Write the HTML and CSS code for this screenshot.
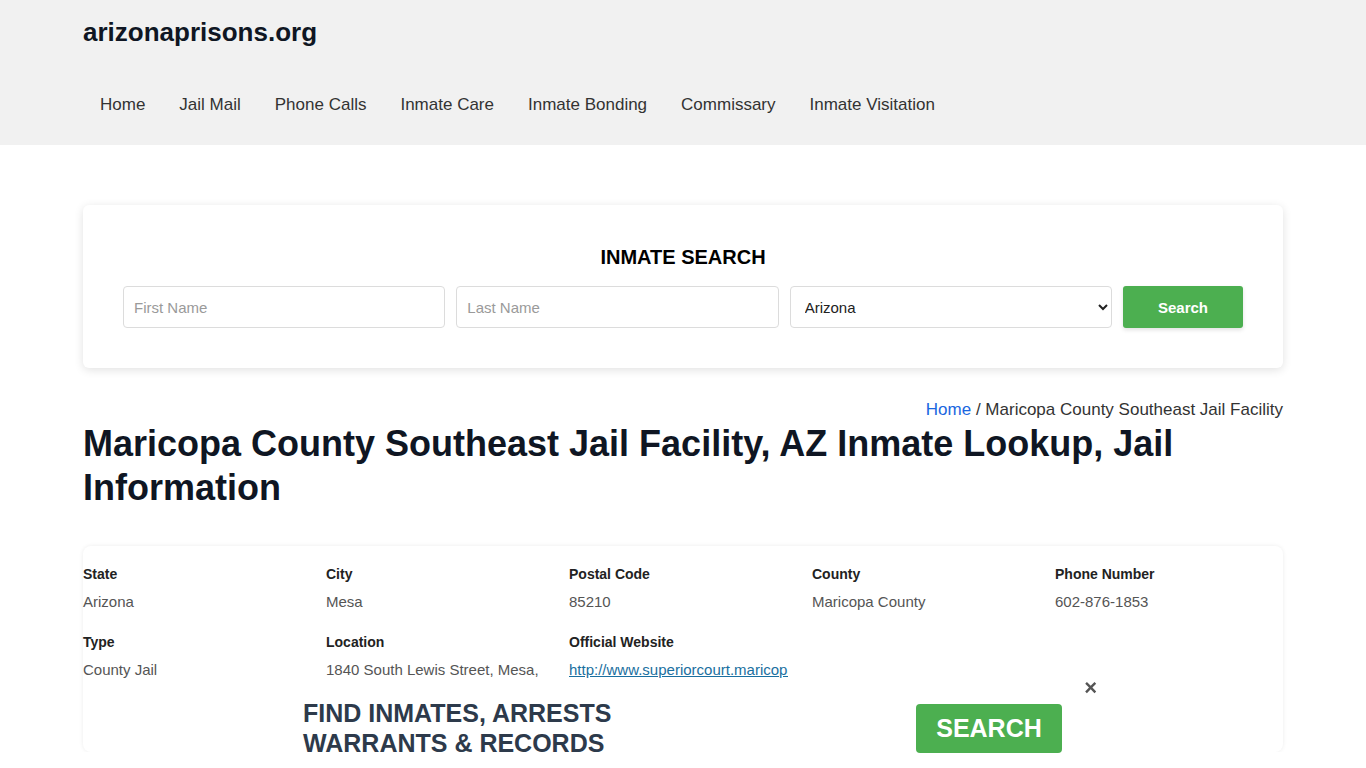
FILE: index.html
```html
<!DOCTYPE html>
<html lang="en">
<head>
<meta charset="utf-8">
<title>Maricopa County Southeast Jail Facility, AZ Inmate Lookup</title>
<link rel="stylesheet" href="styles.css">
</head>
<body>
<header class="site-header">
  <div class="container">
    <div class="logo">arizonaprisons.org</div>
    <nav class="main-nav">
      <a href="#">Home</a>
      <a href="#">Jail Mail</a>
      <a href="#">Phone Calls</a>
      <a href="#">Inmate Care</a>
      <a href="#">Inmate Bonding</a>
      <a href="#">Commissary</a>
      <a href="#">Inmate Visitation</a>
    </nav>
  </div>
</header>

<main class="container">
  <section class="search-card">
    <h2 class="search-title">INMATE SEARCH</h2>
    <form class="search-form">
      <input type="text" placeholder="First Name">
      <input type="text" placeholder="Last Name">
      <select>
        <option>Arizona</option>
      </select>
      <button type="button">Search</button>
    </form>
  </section>

  <div class="breadcrumb"><a href="#">Home</a> / Maricopa County Southeast Jail Facility</div>
  <h1 class="page-title">Maricopa County Southeast Jail Facility, AZ Inmate Lookup, Jail Information</h1>

  <section class="info-card">
    <div class="info-item"><div class="label">State</div><div class="value">Arizona</div></div>
    <div class="info-item"><div class="label">City</div><div class="value">Mesa</div></div>
    <div class="info-item"><div class="label">Postal Code</div><div class="value">85210</div></div>
    <div class="info-item"><div class="label">County</div><div class="value">Maricopa County</div></div>
    <div class="info-item"><div class="label">Phone Number</div><div class="value">602-876-1853</div></div>
    <div class="info-item"><div class="label">Type</div><div class="value">County Jail</div></div>
    <div class="info-item"><div class="label">Location</div><div class="value">1840 South Lewis Street, Mesa, AZ, 85210</div></div>
    <div class="info-item"><div class="label">Official Website</div><div class="value link"><a href="#">http://www.superiorcourt.maricopa.gov/</a></div></div>
  </section>
</main>

<div class="promo">
  <div class="promo-text">FIND INMATES, ARRESTS<br>WARRANTS &amp; RECORDS</div>
  <a class="promo-btn" href="#">SEARCH</a>
  <span class="promo-close">&times;</span>
</div>
</body>
</html>
```

FILE: styles.css
```css
* { box-sizing: border-box; }
html, body { margin: 0; padding: 0; }
body {
  font-family: "Liberation Sans", Arial, sans-serif;
  color: #333;
  background: #fff;
}
.container {
  width: 1200px;
  margin: 0 auto;
}
.site-header {
  background: #f1f1f1;
  height: 145px;
}
.logo {
  font-size: 26px;
  font-weight: 700;
  color: #0f1623;
  padding-top: 17px;
  line-height: 30px;
}
.main-nav {
  display: flex;
  margin-top: 46px;
}
.main-nav a {
  font-size: 17px;
  color: #333;
  text-decoration: none;
  padding: 0 17px;
  line-height: 24px;
}
.search-card {
  margin-top: 60px;
  background: #fff;
  border-radius: 6px;
  box-shadow: 0 2px 10px rgba(0,0,0,0.12);
  padding: 40px 40px 40px;
  height: 163px;
}
.search-title {
  margin: 0 0 17px;
  text-align: center;
  font-size: 20px;
  line-height: 24px;
  font-weight: 700;
  color: #000;
}
.search-form {
  display: flex;
  gap: 11px;
}
.search-form input,
.search-form select {
  flex: 1;
  height: 42px;
  border: 1px solid #dcdcdc;
  border-radius: 4px;
  background: #fff;
  font-family: "Liberation Sans", Arial, sans-serif;
  font-size: 15px;
  color: #222;
  padding: 0 10px;
  min-width: 0;
}
.search-form input::placeholder { color: #9a9a9a; }
.search-form select { padding: 0 10px; }
.search-form button {
  width: 120px;
  flex: none;
  height: 42px;
  border: none;
  border-radius: 3px;
  background: #4caf50;
  color: #fff;
  font-family: "Liberation Sans", Arial, sans-serif;
  font-size: 15px;
  font-weight: 700;
  box-shadow: 0 2px 4px rgba(0,0,0,0.12);
}
.breadcrumb {
  margin-top: 32px;
  text-align: right;
  font-size: 17px;
  line-height: 20px;
  color: #333;
}
.breadcrumb a { color: #1a66e0; text-decoration: none; }
.page-title {
  margin: 2px 0 0;
  font-size: 36px;
  line-height: 44px;
  font-weight: 700;
  color: #0f1623;
}
.info-card {
  margin-top: 36px;
  border-radius: 8px;
  box-shadow: 0 0 4px rgba(0,0,0,0.08);
  display: grid;
  grid-template-columns: repeat(5, minmax(0, 1fr));
  column-gap: 15px;
  row-gap: 18px;
  padding: 18px 0 46px;
}
.info-item { min-width: 0; }
.label {
  font-size: 14px;
  font-weight: 700;
  line-height: 20px;
  color: #222;
}
.value {
  margin-top: 6px;
  font-size: 15px;
  line-height: 24px;
  color: #555;
}
.value.link {
  white-space: nowrap;
  overflow: hidden;
  width: 219px;
}
.value.link a { color: #1a6fa0; text-decoration: underline; }
.promo {
  position: fixed;
  bottom: 0;
  left: 283px;
  width: 800px;
  height: 80px;
  background: #fff;
  display: flex;
  align-items: center;
  justify-content: space-between;
  padding: 0 21px 0 20px;
}
.promo-text {
  font-size: 25px;
  line-height: 30px;
  font-weight: 700;
  color: #2d3a4b;
}
.promo-btn {
  width: 146px;
  height: 49px;
  background: #4caf50;
  border-radius: 4px;
  color: #fff;
  font-size: 25px;
  font-weight: 700;
  text-decoration: none;
  display: flex;
  align-items: center;
  justify-content: center;
}
.promo-close {
  position: absolute;
  top: -12px;
  right: -14px;
  font-size: 22px;
  font-weight: 700;
  color: #555;
  line-height: 24px;
}
```
